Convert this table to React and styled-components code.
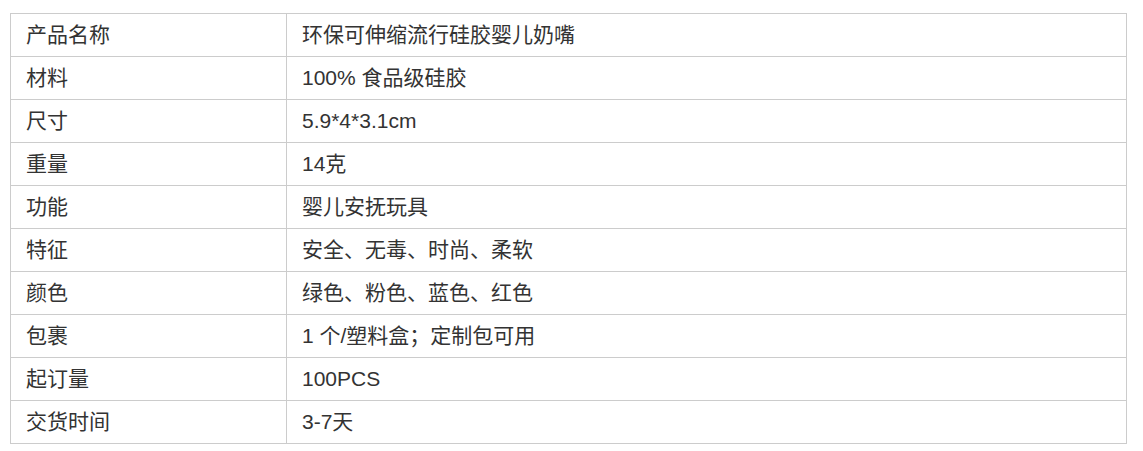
import React from 'react'
import styled, { createGlobalStyle } from 'styled-components'

const rows = [
    ['产品名称', '环保可伸缩流行硅胶婴儿奶嘴'],
    ['材料', '100% 食品级硅胶'],
    ['尺寸', '5.9*4*3.1cm'],
    ['重量', '14克'],
    ['功能', '婴儿安抚玩具'],
    ['特征', '安全、无毒、时尚、柔软'],
    ['颜色', '绿色、粉色、蓝色、红色'],
    ['包裹', '1 个/塑料盒；定制包可用'],
    ['起订量', '100PCS'],
    ['交货时间', '3-7天'],
]

const GlobalStyle = createGlobalStyle`
body {
    margin: 0;
    background: #fff;
}
`

function App() {
    return (
        <Page>
            <GlobalStyle />
            <SpecTable>
                <tbody>
                    {rows.map(([label, value]) => (
                        <Row key={label}>
                            <LabelCell>{label}</LabelCell>
                            <ValueCell>{value}</ValueCell>
                        </Row>
                    ))}
                </tbody>
            </SpecTable>
        </Page>
    )
}

export default App

const Page = styled.div`
padding: 13px 10px;
`

const SpecTable = styled.table`
width: 1117px;
border-collapse: collapse;
table-layout: fixed;
font-family: "Liberation Sans", "Noto Sans CJK SC", sans-serif;
font-size: 21px;
color: #333;
`

const Row = styled.tr`
height: 43px;
`

const Cell = styled.td`
border: 1px solid #ccc;
padding: 0 15px;
line-height: 24px;
vertical-align: middle;
white-space: nowrap;
`

const LabelCell = styled(Cell)`
width: 245px;
`

const ValueCell = styled(Cell)`
`
